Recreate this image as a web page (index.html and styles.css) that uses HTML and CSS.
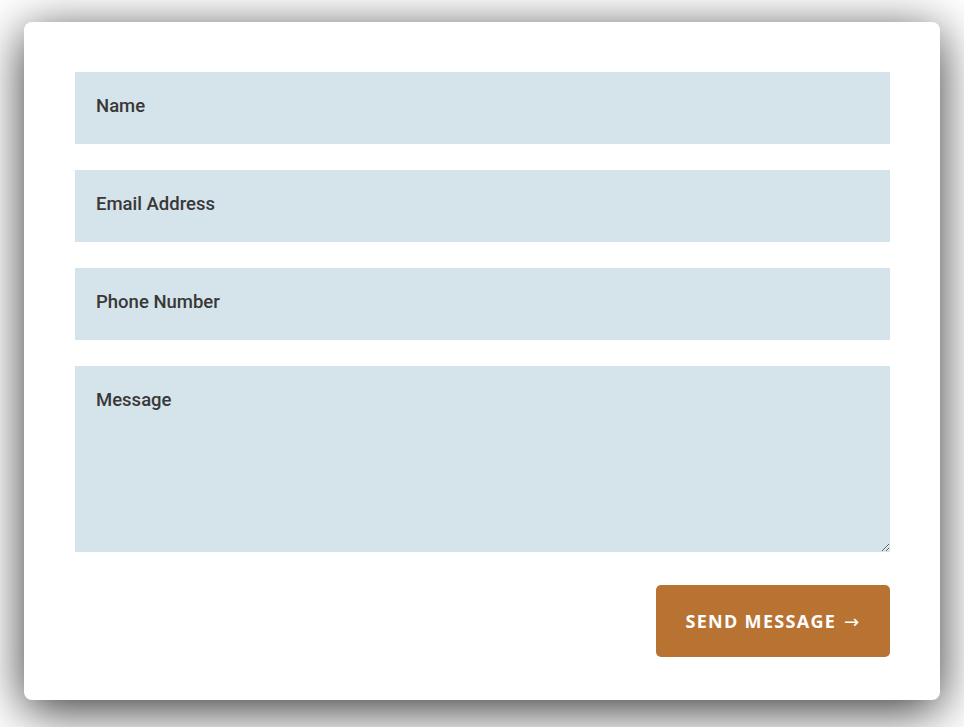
FILE: index.html
```html
<!DOCTYPE html>
<html lang="en">
<head>
    <meta charset="UTF-8">
    <meta name="viewport" content="width=device-width, initial-scale=1.0">
    <title>Contact</title>
    <link rel="stylesheet" href="styles.css">
</head>
<body>
    <div class="card">
        <form class="contact-form" onsubmit="return false;">
            <input type="text" placeholder="Name">
            <input type="email" placeholder="Email Address">
            <input type="tel" placeholder="Phone Number">
            <textarea placeholder="Message"></textarea>

            <div class="actions">
                <button type="submit">Send Message <span class="arrow">&rarr;</span></button>
            </div>
        </form>
    </div>
</body>
</html>
```

FILE: styles.css
```css
html, body {
    margin: 0;
    padding: 0;
    background-color: #ffffff;
}

body {
    box-sizing: border-box;
    min-height: 100vh;
    font-family: Roboto, "Liberation Sans", sans-serif;
    padding: 22px 24px;
    overflow: hidden;
}

.card {
    background-color: white;
    border-radius: 8px;
    padding: 50px 50px 43px 51px;
    box-shadow: 0 10px 50px rgba(0, 0, 0, 0.8);
}

.contact-form {
    display: flex;
    flex-direction: column;
    gap: 26px;
}

input, textarea {
    box-sizing: border-box;
    width: 100%;
    border: none;
    background-color: #d5e3ea;
    padding: 0 21px;
    font-family: Roboto, "Liberation Sans", sans-serif;
    font-size: 18.5px;
    font-weight: 500;
    color: #333;
    outline: none;
}

input {
    height: 72px;
    padding-bottom: 4px;
}

textarea {
    height: 186px;
    padding-top: 23px;
    resize: vertical;
    display: block;
}

input::placeholder, textarea::placeholder {
    color: #383838;
    opacity: 1;
}

.actions {
    display: flex;
    justify-content: flex-end;
    margin-top: 7px;
}

button {
    width: 234px;
    height: 72px;
    background-color: #b87333;
    color: white;
    border: none;
    border-radius: 5px;
    font-family: "Open Sans", "DejaVu Sans", sans-serif;
    font-size: 18px;
    font-weight: 700;
    letter-spacing: 1.3px;
    text-transform: uppercase;
    cursor: pointer;
}

.arrow {
    font-weight: 400;
    margin-left: 2px;
}
```
